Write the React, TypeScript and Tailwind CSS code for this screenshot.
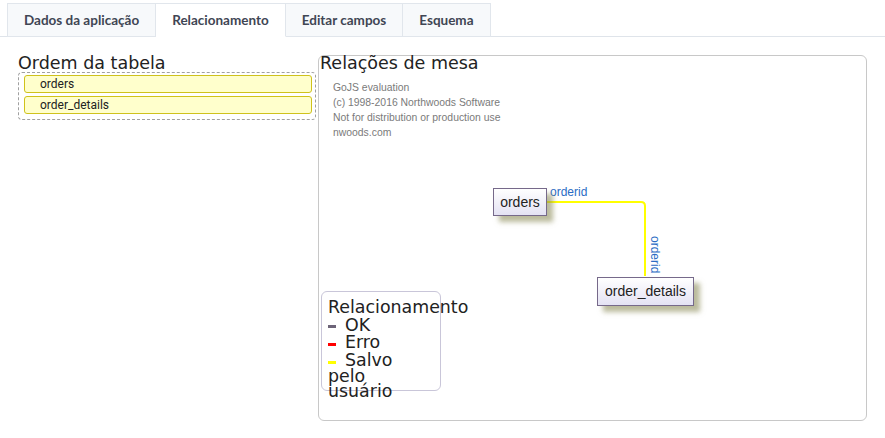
export default function App() {
  const tabs = ["Dados da aplicação", "Relacionamento", "Editar campos", "Esquema"];
  const tables = ["orders", "order_details"];
  return (
    <div className="min-h-[438px] w-[885px] bg-white text-[#222]">
      {/* tab bar */}
      <div className="flex h-[37px] items-end border-b border-[#dfe4ea] pl-[7px]">
        {tabs.map((t) => (
          <div
            key={t}
            className={
              t === "Relacionamento"
                ? "-mb-px flex h-[34px] items-center border border-b-white border-l-0 border-[#e1e6ec] bg-white px-[16px] font-['Lato'] text-[13.5px] font-bold text-[#3f4654]"
                : "-mb-px flex h-[34px] items-center border border-l-0 first:border-l border-[#e1e6ec] bg-[#f7f9fb] px-[16px] font-['Lato'] text-[13.5px] font-bold text-[#3f4654]"
            }
          >
            {t}
          </div>
        ))}
      </div>

      <div className="flex gap-[2px] px-[18px] pt-[17px] font-['DejaVu_Sans',sans-serif]">
        {/* table order */}
        <div className="w-[298px]">
          <h2 className="text-[17.5px] leading-[18px] text-[#222]">Ordem da tabela</h2>
          <div className="flex flex-col gap-[3px] rounded-[4px] border border-dashed border-[#a0a0a0] pt-[2px] pr-[3px] pb-[5px] pl-[5px]">
            {tables.map((t) => (
              <div
                key={t}
                className="h-[18px] rounded-[3px] border border-[#cfc21c] bg-[#ffffcc] pl-[15px] font-['Roboto',sans-serif] text-[12px] leading-[17px] text-[#222]"
              >
                {t}
              </div>
            ))}
          </div>
        </div>

        {/* relations panel */}
        <div className="relative mt-[1px] h-[366px] flex-1 rounded-[6px] border border-[#c8c8c8]">
          <h2 className="-mt-[2px] pl-[1px] text-[17.5px] leading-[18px] text-[#222]">Relações de mesa</h2>
          <div className="mt-[8px] pl-[14px] font-['Liberation_Sans',sans-serif] text-[10.4px] leading-[15px] text-[#7a7a7a]">
            <div>GoJS evaluation</div>
            <div>(c) 1998-2016 Northwoods Software</div>
            <div>Not for distribution or production use</div>
            <div>nwoods.com</div>
          </div>

          {/* link */}
          <svg className="absolute left-0 top-0" width="549" height="366">
            <path d="M228 146 H322 Q326 146 326 150 V220" fill="none" stroke="#ffff00" strokeWidth="2" />
          </svg>
          <div className="absolute left-[231px] top-[129px] font-['Liberation_Sans',sans-serif] text-[12px] leading-[14px] text-[#2b6cc4]">
            orderid
          </div>
          <div className="absolute left-[329px] top-[180px] font-['Liberation_Sans',sans-serif] text-[12px] leading-[14px] text-[#2b6cc4] [writing-mode:vertical-rl]">
            orderid
          </div>

          {/* nodes */}
          <div className="absolute left-[174px] top-[132px] flex h-[28px] w-[54px] items-center justify-center border border-[#76698a] bg-gradient-to-b from-white to-[#e4e2f3] font-['Liberation_Sans',sans-serif] text-[14px] text-[#222] shadow-[6px_6px_5px_rgba(140,140,90,0.6)]">
            orders
          </div>
          <div className="absolute left-[278px] top-[221px] flex h-[29px] w-[97px] items-center justify-center border border-[#76698a] bg-gradient-to-b from-white to-[#e4e2f3] font-['Liberation_Sans',sans-serif] text-[14px] text-[#222] shadow-[6px_6px_5px_rgba(140,140,90,0.6)]">
            order_details
          </div>

          {/* legend */}
          <div className="absolute left-[2px] top-[235px] h-[100px] w-[120px] rounded-[6px] border border-[#c9c6d9] pl-[6px] pt-[7px] text-[17.4px] leading-[17.6px] text-[#222]">
            <div className="whitespace-nowrap">Relacionamento</div>
            <div className="flex items-center">
              <span className="mr-[9px] mt-[3px] h-[3px] w-[8px] bg-[#6d6478]"></span>OK
            </div>
            <div className="flex items-center">
              <span className="mr-[9px] mt-[3px] h-[3px] w-[8px] bg-[#ff0000]"></span>Erro
            </div>
            <div className="flex items-center">
              <span className="mr-[9px] mt-[3px] h-[3px] w-[8px] bg-[#ffff00]"></span>Salvo
            </div>
            <div className="leading-[15px]">pelo</div>
            <div className="leading-[15px]">usuário</div>
          </div>
        </div>
      </div>
    </div>
  );
}
